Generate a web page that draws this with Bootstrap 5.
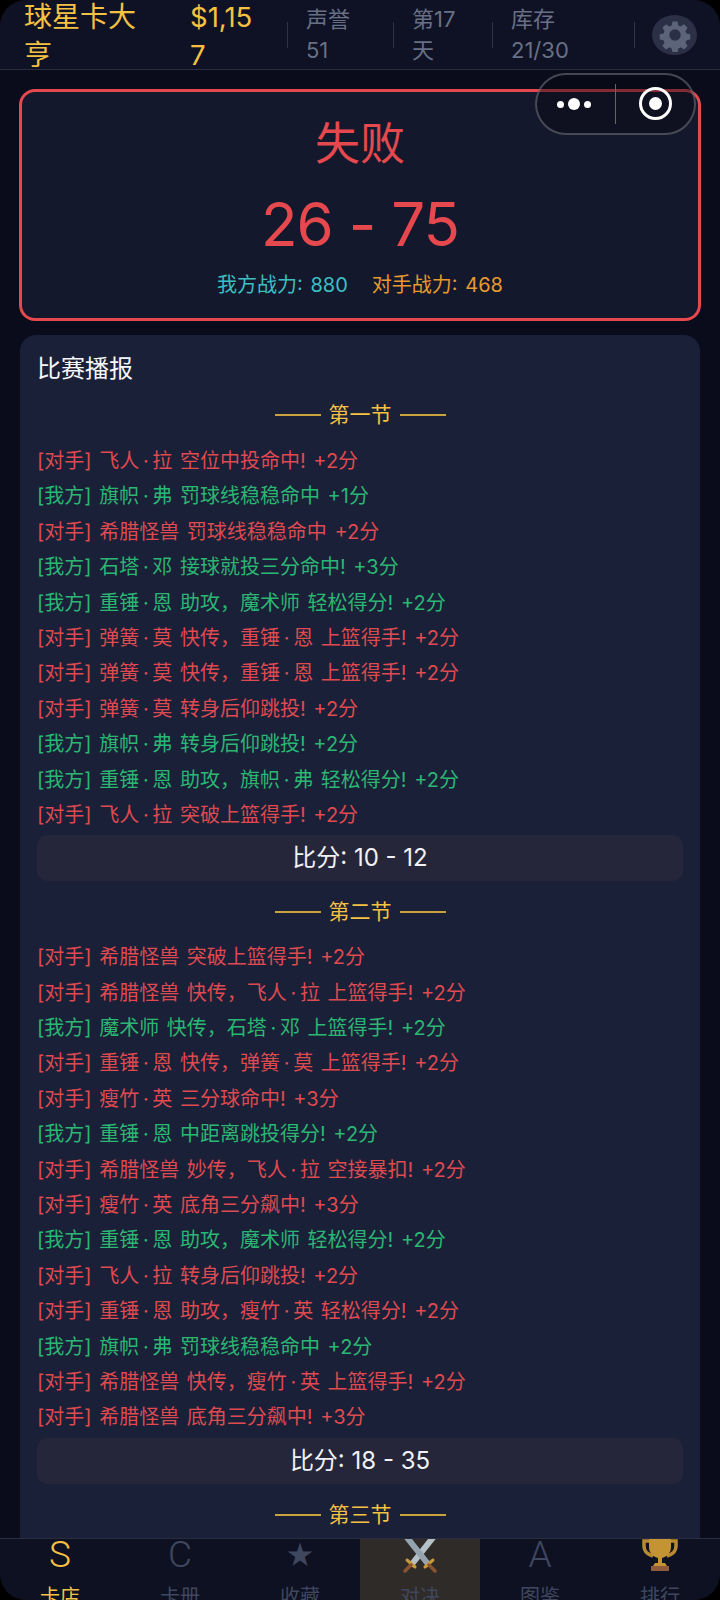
<!DOCTYPE html>
<html lang="zh"><head><meta charset="utf-8"><title>球星卡大亨</title>
<link href="https://cdn.jsdelivr.net/npm/bootstrap@5.3.0/dist/css/bootstrap.min.css" rel="stylesheet">
<style>
html,body{height:1600px;overflow:hidden;background:#0a0c1c}
body{font-family:Inter,"Noto Sans CJK SC",sans-serif;font-weight:400;position:relative;width:720px}
.topbar{height:70px;background:#0f1225;border-bottom:1px solid #2a2d40;padding:0 0 0 24px;flex:none}
.brand{width:122px;font-size:28px;line-height:38px;color:#f5c143;flex:none;padding-top:2px}
.money{width:64px;margin-left:44px;margin-right:33px;font-size:27.500px;line-height:38px;color:#f5c143;flex:none;word-break:break-all;padding-top:2px}
.stat{font-size:22px;line-height:30.500px;color:#687085;flex:none;padding-left:18px}
.s1{width:105px}.s2{width:98px;padding-right:30px}.s3{width:141px}
.sep{width:1px;height:26px;background:#2f3346;flex:none}
.gear{width:45px;height:40px;border-radius:50%;background:#2b3047;margin-left:17px;flex:none}
.result{margin:19px 19px 14px;height:232px;border:3px solid #e5484d;border-radius:16px;background:#14182c;flex:none}
.verdict{font-size:45px;line-height:60px;color:#e5484d;margin-top:22px}
.bigscore{font-size:60px;line-height:80px;color:#e5484d;margin-top:10px;letter-spacing:-1px}
.power{font-size:20px;line-height:28px;margin-top:7px;word-spacing:2px}
.mine{color:#3cbfc4}.theirs{color:#e79a2d;margin-left:24px}
.feed{margin:0 20px;background:#1a2038;border-radius:16px 16px 0 0;padding:18px 17px 0 17px;flex:1 1 0;overflow:hidden}
.feedtitle{font-size:24px;line-height:32px;color:#f6f7fa}
.quarter{font-size:21px;line-height:30px;color:#f5c143;gap:8px}
.quarter::before,.quarter::after{content:"";width:46px;height:2px;background:#c9a23e}
.q1{margin-top:15px;margin-bottom:14px}
.qn{margin-top:16px;margin-bottom:13px}
.ev{font-size:20px;line-height:35.400px;height:35.400px;white-space:nowrap;word-spacing:2px}
.ev.o{color:#de4a50}.ev.m{color:#2bb673}
.md{font-style:normal;padding:0 3.700px}
.tally{height:46px;background:#26263a;border-radius:10px;color:#f1f2f6;font-size:24px;margin-top:2px}
.tabs{height:62px;background:#0e1122;border-top:1px solid #2a2d40;flex:none;overflow:hidden}
.tab{width:120px;height:61px;flex:none;overflow:hidden;color:#3f475f;font-size:20px}
.tab.on{color:#f5c143}.tab.act{background:#2f2b29}
.tabicon{height:42px;font-family:Roboto,sans-serif;font-size:37px;line-height:32px;width:100%;font-weight:300}
.tabicon.sm{font-size:28px}
.tablabel{line-height:26px;margin-top:3px;white-space:nowrap}
.capsule{position:absolute;left:535px;top:73px;width:161px;height:62px;border-radius:31px;border:2px solid rgba(130,130,140,.5);background:rgba(8,9,20,.45)}
.capsule .dv{position:absolute;left:78px;top:9px;width:1px;height:40px;background:#666}
.dot{position:absolute;border-radius:50%;background:#fff}
.ring{position:absolute;left:102px;top:12px;width:33px;height:33px;border:3.500px solid #fff;border-radius:50%}
.ring::after{content:"";position:absolute;left:6.500px;top:6.500px;width:13px;height:13px;border-radius:50%;background:#fff}
.corners{position:absolute;inset:0;border-radius:26px;box-shadow:0 0 0 30px #000;pointer-events:none}
</style></head><body>
<div class="d-flex flex-column" style="height:1600px">
<header class="topbar d-flex align-items-center">
 <div class="brand">球星卡大亨</div>
 <div class="money">$1,157</div>
 <div class="sep"></div><div class="stat s1">声誉<br>51</div>
 <div class="sep"></div><div class="stat s2">第17天</div>
 <div class="sep"></div><div class="stat s3">库存<br>21/30</div>
 <div class="sep"></div>
 <div class="gear d-flex align-items-center justify-content-center"><svg width="34" height="34" viewBox="0 0 24 24"><path fill="#5c6479" fill-rule="evenodd" d="M10 1.5h4l.6 3 1.9.8 2.6-1.7 2.8 2.8-1.7 2.6.8 1.9 3 .6v4l-3 .6-.8 1.9 1.7 2.6-2.8 2.8-2.6-1.7-1.9.8-.6 3h-4l-.6-3-1.9-.8-2.6 1.7-2.8-2.8 1.7-2.6-.8-1.9-3-.6v-4l3-.6.8-1.9-1.7-2.6 2.8-2.8 2.6 1.7 1.9-.8zM12 7.5a4.500 4.500 0 1 0 0 9 4.500 4.500 0 0 0 0-9z" transform="translate(1.200 1.200) scale(.9)"/></svg></div>
</header>
<section class="result text-center">
 <div class="verdict">失败</div>
 <div class="bigscore">26 - 75</div>
 <div class="power"><span class="mine">我方战力: 880</span><span class="theirs">对手战力: 468</span></div>
</section>
<main class="feed">
 <div class="feedtitle">比赛播报</div>
 <div class="quarter q1 d-flex align-items-center justify-content-center">第一节</div>
 <div class="ev o">[对手] 飞人<i class="md">·</i>拉 空位中投命中! +2分</div>
 <div class="ev m">[我方] 旗帜<i class="md">·</i>弗 罚球线稳稳命中 +1分</div>
 <div class="ev o">[对手] 希腊怪兽 罚球线稳稳命中 +2分</div>
 <div class="ev m">[我方] 石塔<i class="md">·</i>邓 接球就投三分命中! +3分</div>
 <div class="ev m">[我方] 重锤<i class="md">·</i>恩 助攻，魔术师 轻松得分! +2分</div>
 <div class="ev o">[对手] 弹簧<i class="md">·</i>莫 快传，重锤<i class="md">·</i>恩 上篮得手! +2分</div>
 <div class="ev o">[对手] 弹簧<i class="md">·</i>莫 快传，重锤<i class="md">·</i>恩 上篮得手! +2分</div>
 <div class="ev o">[对手] 弹簧<i class="md">·</i>莫 转身后仰跳投! +2分</div>
 <div class="ev m">[我方] 旗帜<i class="md">·</i>弗 转身后仰跳投! +2分</div>
 <div class="ev m">[我方] 重锤<i class="md">·</i>恩 助攻，旗帜<i class="md">·</i>弗 轻松得分! +2分</div>
 <div class="ev o">[对手] 飞人<i class="md">·</i>拉 突破上篮得手! +2分</div>
 <div class="tally d-flex align-items-center justify-content-center">比分: 10 - 12</div>
 <div class="quarter qn d-flex align-items-center justify-content-center">第二节</div>
 <div class="ev o">[对手] 希腊怪兽 突破上篮得手! +2分</div>
 <div class="ev o">[对手] 希腊怪兽 快传，飞人<i class="md">·</i>拉 上篮得手! +2分</div>
 <div class="ev m">[我方] 魔术师 快传，石塔<i class="md">·</i>邓 上篮得手! +2分</div>
 <div class="ev o">[对手] 重锤<i class="md">·</i>恩 快传，弹簧<i class="md">·</i>莫 上篮得手! +2分</div>
 <div class="ev o">[对手] 瘦竹<i class="md">·</i>英 三分球命中! +3分</div>
 <div class="ev m">[我方] 重锤<i class="md">·</i>恩 中距离跳投得分! +2分</div>
 <div class="ev o">[对手] 希腊怪兽 妙传，飞人<i class="md">·</i>拉 空接暴扣! +2分</div>
 <div class="ev o">[对手] 瘦竹<i class="md">·</i>英 底角三分飙中! +3分</div>
 <div class="ev m">[我方] 重锤<i class="md">·</i>恩 助攻，魔术师 轻松得分! +2分</div>
 <div class="ev o">[对手] 飞人<i class="md">·</i>拉 转身后仰跳投! +2分</div>
 <div class="ev o">[对手] 重锤<i class="md">·</i>恩 助攻，瘦竹<i class="md">·</i>英 轻松得分! +2分</div>
 <div class="ev m">[我方] 旗帜<i class="md">·</i>弗 罚球线稳稳命中 +2分</div>
 <div class="ev o">[对手] 希腊怪兽 快传，瘦竹<i class="md">·</i>英 上篮得手! +2分</div>
 <div class="ev o">[对手] 希腊怪兽 底角三分飙中! +3分</div>
 <div class="tally d-flex align-items-center justify-content-center">比分: 18 - 35</div>
 <div class="quarter qn d-flex align-items-center justify-content-center">第三节</div>
</main>
<nav class="tabs d-flex">
 <div class="tab on text-center"><div class="tabicon">S</div><div class="tablabel">卡店</div></div>
 <div class="tab text-center"><div class="tabicon">C</div><div class="tablabel">卡册</div></div>
 <div class="tab text-center"><div class="tabicon sm">★</div><div class="tablabel">收藏</div></div>
 <div class="tab act text-center"><div class="tabicon d-flex justify-content-center"><svg width="42" height="44" viewBox="0 0 42 44"><g stroke-linecap="round"><path d="M36 -4L13 25" stroke="#b4bfc6" stroke-width="6"/><path d="M6 -4L29 25" stroke="#94a3ad" stroke-width="6"/><path d="M8 21l8 7M34 21l-8 7" stroke="#c99a3a" stroke-width="3"/><path d="M12 26l-6 6M30 26l6 6" stroke="#8a5330" stroke-width="3.500"/></g></svg></div><div class="tablabel">对决</div></div>
 <div class="tab text-center"><div class="tabicon">A</div><div class="tablabel">图鉴</div></div>
 <div class="tab text-center"><div class="tabicon d-flex justify-content-center"><svg width="36" height="44" viewBox="0 0 36 44"><path fill="none" stroke="#b98a30" stroke-width="3.500" d="M8 2H2v5c0 6 5 9 9 10M28 2h6v5c0 6-5 9-9 10"/><path fill="#c49434" d="M7-1h22v9c0 7-5 10-9 11v5h3l2 3H11l2-3h3v-5c-4-1-9-4-9-11z"/><path fill="#8f5c3c" d="M9 27h18v5H9z"/></svg></div><div class="tablabel">排行</div></div>
</nav>
</div>
<div class="capsule"><span class="dot" style="left:20px;top:25.500px;width:7px;height:7px"></span><span class="dot" style="left:31px;top:23px;width:12px;height:12px"></span><span class="dot" style="left:46.500px;top:25.500px;width:7px;height:7px"></span><span class="dv"></span><span class="ring"></span></div>
<div class="corners"></div>
</body></html>
